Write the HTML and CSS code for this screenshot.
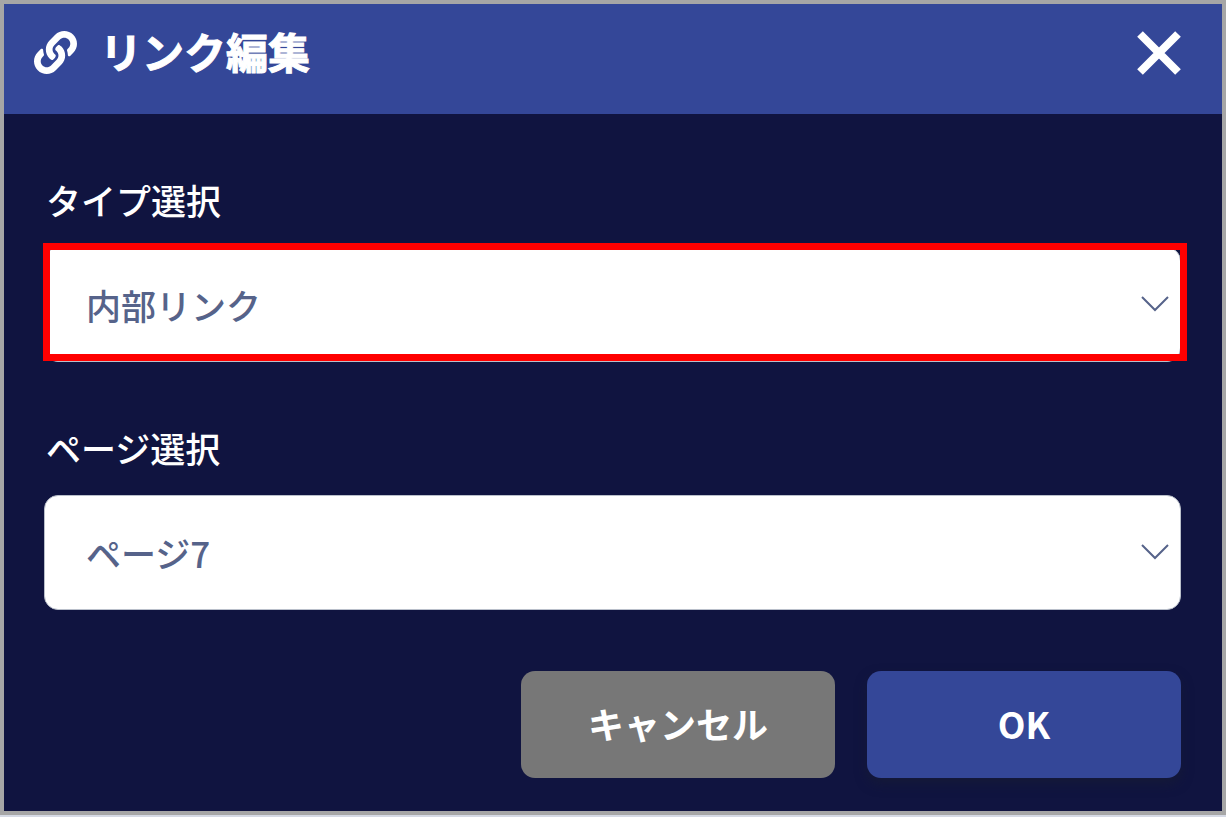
FILE: index.html
```html
<!DOCTYPE html>
<html lang="ja">
  <head>
    <meta charset="UTF-8" />
    <meta name="viewport" content="width=device-width, initial-scale=1.0" />
    <title>リンク編集</title>
    <link rel="stylesheet" href="styles.css">
  </head>
  <body>
    <form class="modal">
      <header class="modal-header">
        <svg class="link-icon" viewBox="0 0 512 512" aria-hidden="true">
          <path d="M326.612 185.391c59.747 59.809 58.927 155.698.36 214.59-.11.12-.24.25-.36.37l-67.2 67.2c-59.27 59.27-155.699 59.262-214.96 0-59.27-59.26-59.27-155.7 0-214.96l37.106-37.106c9.84-9.84 26.786-3.3 27.294 10.606.648 17.722 3.826 35.527 9.69 52.721 1.986 5.822.567 12.262-3.783 16.612l-13.087 13.087c-28.026 28.026-28.905 73.66-1.155 101.96 28.024 28.579 74.086 28.749 102.325.51l67.2-67.19c28.191-28.191 28.073-73.757 0-101.83-3.701-3.694-7.429-6.564-10.341-8.569a16.037 16.037 0 0 1-6.947-12.606c-.396-10.567 3.348-21.456 11.698-29.806l21.054-21.055c5.521-5.521 14.182-6.199 20.584-1.731a152.482 152.482 0 0 1 20.522 17.197zM467.547 44.449c-59.261-59.262-155.69-59.27-214.96 0l-67.2 67.2c-.12.12-.25.25-.36.37-58.566 58.892-59.387 154.781.36 214.59a152.454 152.454 0 0 0 20.521 17.196c6.402 4.468 15.064 3.789 20.584-1.731l21.054-21.055c8.35-8.35 12.094-19.239 11.698-29.806a16.037 16.037 0 0 0-6.947-12.606c-2.912-2.005-6.64-4.875-10.341-8.569-28.073-28.073-28.191-73.639 0-101.83l67.2-67.19c28.239-28.239 74.3-28.069 102.325.51 27.75 28.3 26.872 73.934-1.155 101.96l-13.087 13.087c-4.35 4.35-5.769 10.79-3.783 16.612 5.864 17.194 9.042 34.999 9.69 52.721.509 13.906 17.454 20.446 27.294 10.606l37.106-37.106c59.271-59.259 59.271-155.699.001-214.959z" />
        </svg>
        <h1>リンク編集</h1>
        <button class="close" type="button" aria-label="閉じる">
          <svg viewBox="0 0 44 44" aria-hidden="true">
            <path d="M3 3l38 38M41 3L3 41" />
          </svg>
        </button>
      </header>
      <div class="modal-body">
        <div class="field">
          <label for="link-type">タイプ選択</label>
          <div class="select-box highlight">
            <select id="link-type">
              <option>内部リンク</option>
            </select>
            <svg class="chevron" viewBox="0 0 28 16" aria-hidden="true">
              <path d="M1 1l13 13L27 1" />
            </svg>
          </div>
        </div>
        <div class="field">
          <label for="link-page">ページ選択</label>
          <div class="select-box">
            <select id="link-page">
              <option>ページ7</option>
            </select>
            <svg class="chevron" viewBox="0 0 28 16" aria-hidden="true">
              <path d="M1 1l13 13L27 1" />
            </svg>
          </div>
        </div>
        <div class="actions">
          <button class="btn btn-cancel" type="button">キャンセル</button>
          <button class="btn btn-ok" type="submit">OK</button>
        </div>
      </div>
    </form>
  </body>
</html>
```

FILE: styles.css
```css
* {
  box-sizing: border-box;
}
body {
  margin: 0;
  background-color: #d5d9e4;
  font-family: "Noto Sans CJK JP", sans-serif;
}
.modal {
  border: 4px solid #a6a6a6;
  background-color: #101440;
  box-shadow: 0 1px 0 #101440;
}
.modal-header {
  display: flex;
  align-items: flex-start;
  padding: 18px 41px 20px 30px;
  height: 110px;
  background-color: #344798;
  color: white;
}
.link-icon {
  width: 43px;
  height: 43px;
  margin-top: 9px;
  fill: white;
}
h1 {
  flex: 1;
  margin: 0 0 0 23px;
  font-size: 42px;
  line-height: 58px;
  font-weight: bold;
  -webkit-text-stroke: 1px white;
}
.close {
  width: 44px;
  height: 44px;
  margin-top: 9px;
  padding: 0;
  border: 0;
  background: none;
  cursor: pointer;
}
.close svg {
  display: block;
  fill: none;
  stroke: white;
  stroke-width: 8;
}
.modal-body {
  padding: 60px 41px 33px 40px;
}
.field {
  margin-bottom: 60px;
}
.field label {
  display: block;
  margin-bottom: 21px;
  padding-left: 2px;
  color: white;
  font-size: 35px;
  font-weight: 500;
  line-height: 52px;
}
.select-box {
  position: relative;
}
.select-box select {
  appearance: none;
  display: block;
  width: 100%;
  height: 115px;
  padding: 0 80px 0 41px;
  border: 1px solid #b9bfca;
  border-radius: 14px;
  background-color: white;
  color: #56638a;
  font-family: inherit;
  font-size: 35px;
  font-weight: 500;
}
.chevron {
  position: absolute;
  top: 49px;
  right: 12px;
  width: 28px;
  height: 16px;
  fill: none;
  stroke: #56638a;
  stroke-width: 2;
  pointer-events: none;
}
/* Red frame around the field to fill in */
.highlight::after {
  content: "";
  position: absolute;
  inset: -4px -6px 1px -1px;
  border: 7px solid #ff0000;
  pointer-events: none;
}
.actions {
  display: flex;
  justify-content: flex-end;
  gap: 32px;
  padding-top: 1px;
}
.btn {
  width: 314px;
  height: 107px;
  padding: 0 0 3px;
  border: 0;
  border-radius: 14px;
  color: white;
  font-family: inherit;
  font-size: 36px;
  font-weight: bold;
  cursor: pointer;
}
.btn-cancel {
  background-color: #777777;
}
.btn-ok {
  background-color: #344798;
  box-shadow: 0 6px 12px rgba(24, 28, 50, 0.6);
}
```
